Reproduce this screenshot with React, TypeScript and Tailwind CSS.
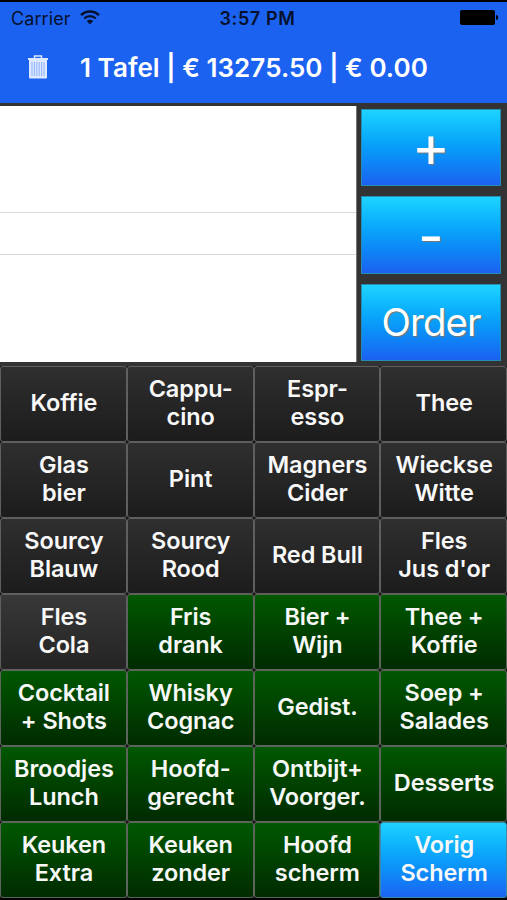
import clsx from "clsx";

type Tone = "dark" | "slate" | "green" | "blue";

interface Item {
  lines: string[];
  tone: Tone;
}

// Product and category keys, row by row
const items: Item[] = [
  { lines: ["Koffie"], tone: "dark" },
  { lines: ["Cappu-", "cino"], tone: "dark" },
  { lines: ["Espr-", "esso"], tone: "dark" },
  { lines: ["Thee"], tone: "dark" },
  { lines: ["Glas", "bier"], tone: "dark" },
  { lines: ["Pint"], tone: "dark" },
  { lines: ["Magners", "Cider"], tone: "dark" },
  { lines: ["Wieckse", "Witte"], tone: "dark" },
  { lines: ["Sourcy", "Blauw"], tone: "dark" },
  { lines: ["Sourcy", "Rood"], tone: "dark" },
  { lines: ["Red Bull"], tone: "dark" },
  { lines: ["Fles", "Jus d'or"], tone: "dark" },
  { lines: ["Fles", "Cola"], tone: "slate" },
  { lines: ["Fris", "drank"], tone: "green" },
  { lines: ["Bier +", "Wijn"], tone: "green" },
  { lines: ["Thee +", "Koffie"], tone: "green" },
  { lines: ["Cocktail", "+ Shots"], tone: "green" },
  { lines: ["Whisky", "Cognac"], tone: "green" },
  { lines: ["Gedist."], tone: "green" },
  { lines: ["Soep +", "Salades"], tone: "green" },
  { lines: ["Broodjes", "Lunch"], tone: "green" },
  { lines: ["Hoofd-", "gerecht"], tone: "green" },
  { lines: ["Ontbijt+", "Voorger."], tone: "green" },
  { lines: ["Desserts"], tone: "green" },
  { lines: ["Keuken", "Extra"], tone: "green" },
  { lines: ["Keuken", "zonder"], tone: "green" },
  { lines: ["Hoofd", "scherm"], tone: "green" },
  { lines: ["Vorig", "Scherm"], tone: "blue" },
];

const tones: Record<Tone, string> = {
  dark: "border-[#5f5f5f] from-[#2f2f2f] to-[#1c1c1c]",
  slate: "border-[#5f5f5f] from-[#383838] to-[#242424]",
  green: "border-[#5b655b] from-[#005800] to-[#002b00]",
  blue: "border-[#3b8ba8] from-[#1ed2ff] to-[#1c63f2]",
};

function StatusBar() {
  return (
    <div className="grid h-[33px] grid-cols-3 items-center px-[11px] text-[18px] text-[#06102c]">
      <div className="flex items-center gap-[9px]">
        <span className="tracking-[0.1px]">Carrier</span>
        <svg className="-mt-[3px]" width="20" height="15" viewBox="0 0 20 15" fill="none">
          <path d="M1 5.2C6.1.2 13.9.2 19 5.2" stroke="currentColor" strokeWidth="2.4" />
          <path d="M4.2 8.5c3.3-3.2 8.3-3.2 11.6 0" stroke="currentColor" strokeWidth="2.3" />
          <path d="M6.8 11.1c1.9-1.8 4.5-1.8 6.4 0L10 14.4z" fill="currentColor" />
        </svg>
      </div>
      <span className="pl-[8px] text-center font-semibold tracking-[0.6px] whitespace-nowrap">
        3:57 PM
      </span>
      <svg className="-mt-[2px] -mr-[3px] justify-self-end" width="39" height="15" viewBox="0 0 39 15">
        <rect width="35" height="15" rx="2" fill="#000" />
        <path d="M36 5c3 .6 3 4.400 0 5z" fill="#000" />
      </svg>
    </div>
  );
}

function TrashIcon() {
  return (
    <svg className="-mt-[3px]" width="20" height="24" viewBox="0 0 20 24" fill="none">
      <path d="M6.500 3V1h7v2" stroke="#dbe8ff" strokeWidth="1.400" />
      <path d="M0 3h20v2H0z" fill="#dbe8ff" />
      <path d="M1 5h18v17.500q0 1-1 1H2q-1 0-1-1z" fill="#dbe8ff" />
      <path
        d="M4 7v14M6.400 7v14M8.800 7v14M11.200 7v14M13.600 7v14M16 7v14"
        stroke="#8fb1fa"
        strokeWidth="1"
      />
    </svg>
  );
}

function ActionButton({ label, className }: { label: string; className?: string }) {
  return (
    <button
      className={clsx(
        "flex items-center justify-center border border-[#258daf] bg-linear-to-b from-[#1ed4ff] to-[#1c60f0] text-white [text-shadow:1px_1px_1px_#777]",
        className,
      )}
    >
      {label}
    </button>
  );
}

function Key({ item }: { item: Item }) {
  return (
    <button
      className={clsx(
        "flex items-center justify-center rounded-[3px] border bg-linear-to-b pb-[3px] pl-[1px] text-[#f8f8f8]",
        tones[item.tone],
      )}
    >
      <span className="text-center text-[23.500px] leading-[28px] font-semibold tracking-[-0.1px] whitespace-nowrap">
        {item.lines.map((line) => (
          <span key={line} className="block">
            {line}
          </span>
        ))}
      </span>
    </button>
  );
}

export default function App() {
  return (
    <div className="flex h-[900px] w-[507px] flex-col overflow-hidden bg-black pt-[2px] font-['Inter',sans-serif]">
      {/* Header */}
      <header className="h-[101px] shrink-0 bg-[#1c62f0]">
        <StatusBar />
        <div className="flex items-center pt-[14px] pl-[28px]">
          <TrashIcon />
          <h1 className="ml-[32px] text-[26px] leading-[38px] font-semibold tracking-[0.04px] whitespace-nowrap text-white">
            1 Tafel | € 13275.50 | € 0.00
          </h1>
        </div>
      </header>

      {/* Order list and actions */}
      <section className="flex h-[263px] shrink-0 bg-[#333333] pt-[3px] pb-1">
        <div className="flex w-[357px] flex-col border-r border-[#777] bg-white">
          <div className="h-[107px] border-b border-[#d8d8d8]" />
          <div className="h-[42px] border-b border-[#d8d8d8]" />
        </div>
        <div className="ml-1 flex w-[140px] flex-col gap-[10px] pt-[3px]">
          <ActionButton label="+" className="h-[77px] pb-[2px] text-[58px]" />
          <ActionButton label="-" className="h-[78px] pt-[2px] text-[56px]" />
          <ActionButton label="Order" className="h-[77px] text-[38.500px] tracking-[-1px]" />
        </div>
      </section>

      {/* Keys */}
      <main className="grid h-[532px] shrink-0 grid-cols-4 grid-rows-7 bg-[#1b1b1b]">
        {items.map((item) => (
          <Key key={item.lines.join(" ")} item={item} />
        ))}
      </main>
    </div>
  );
}
